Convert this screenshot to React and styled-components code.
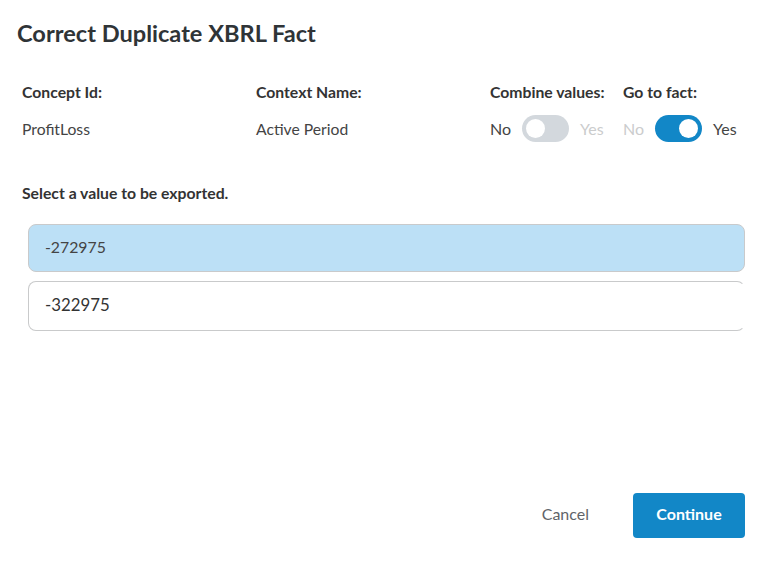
import styled, { createGlobalStyle } from "styled-components";

const GlobalStyle = createGlobalStyle`
  html, body {
    margin: 0;
    padding: 0;
    background: #fff;
  }
  body {
    font-family: Lato, "Liberation Sans", sans-serif;
    color: #333;
  }
  * {
    box-sizing: border-box;
  }
`;

const Dialog = styled.div`
  width: 777px;
  height: 574px;
  padding: 17px 32px 36px 17px;
  display: flex;
  flex-direction: column;
  overflow: hidden;
`;

const Title = styled.h1`
  margin: 0;
  font-size: 23.6px;
  line-height: 33px;
  font-weight: 700;
  color: #2f3437;
`;

const Fields = styled.div`
  display: flex;
  margin: 32px 0 0 5px;
`;

const Field = styled.div`
  flex: none;
  width: ${(props) => props.width}px;
`;

const Label = styled.div`
  font-size: 15.75px;
  line-height: 20px;
  font-weight: 700;
  color: #333;
`;

const Value = styled.div`
  margin-top: 17px;
  font-size: 15.7px;
  line-height: 20px;
  color: #444;
`;

const ToggleRow = styled.div`
  display: flex;
  align-items: center;
  gap: 11px;
  margin-top: 12px;
  height: 28px;
  font-size: 16px;
`;

const ToggleText = styled.span`
  color: ${(props) => (props.off ? "#cbcccd" : "#444")};
`;

const Track = styled.div`
  width: 47px;
  height: 27px;
  border-radius: 14px;
  padding: 4px;
  display: flex;
  justify-content: ${(props) => (props.on ? "flex-end" : "flex-start")};
  background: ${(props) => (props.on ? "#1287c7" : "#d3d8dd")};
`;

const Knob = styled.div`
  width: 19px;
  height: 19px;
  border-radius: 50%;
  background: #fff;
`;

const Prompt = styled.div`
  margin: 41px 0 0 5px;
  font-size: 15.75px;
  line-height: 20px;
  font-weight: 700;
  color: #333;
`;

const Options = styled.div`
  display: flex;
  flex-direction: column;
  gap: 9px;
  margin: 21px 0 0 11px;
`;

const Option = styled.div`
  height: ${(props) => (props.selected ? 48 : 50)}px;
  padding: 0 16px 3px;
  display: flex;
  align-items: center;
  font-size: ${(props) => (props.selected ? 15.8 : 16.8)}px;
  color: ${(props) => (props.selected ? "#444" : "#333")};
  border: 1px solid #c9cacb;
  border-right-color: ${(props) => (props.selected ? "#c9cacb" : "transparent")};
  border-radius: 8px;
  background: ${(props) => (props.selected ? "#bce0f6" : "#fff")};
`;

const Footer = styled.div`
  margin-top: auto;
  display: flex;
  justify-content: flex-end;
  align-items: center;
  gap: 44px;
`;

const CancelButton = styled.button`
  border: 0;
  padding: 0 0 5px;
  background: none;
  font: inherit;
  font-size: 16px;
  color: #5f6469;
`;

const ContinueButton = styled.button`
  width: 112px;
  height: 45px;
  border: 0;
  border-radius: 4px;
  padding: 0 0 5px;
  background: #1287c7;
  color: #fff;
  font: inherit;
  font-size: 16px;
  font-weight: 700;
`;

export default function App() {
  return (
    <>
      <GlobalStyle />
      <Dialog>
        <Title>Correct Duplicate XBRL Fact</Title>
        <Fields>
          <Field width={234}>
            <Label>Concept Id:</Label>
            <Value>ProfitLoss</Value>
          </Field>
          <Field width={234}>
            <Label>Context Name:</Label>
            <Value>Active Period</Value>
          </Field>
          <Field width={133}>
            <Label>Combine values:</Label>
            <ToggleRow>
              <ToggleText>No</ToggleText>
              <Track>
                <Knob />
              </Track>
              <ToggleText off>Yes</ToggleText>
            </ToggleRow>
          </Field>
          <Field width={122}>
            <Label>Go to fact:</Label>
            <ToggleRow>
              <ToggleText off>No</ToggleText>
              <Track on>
                <Knob />
              </Track>
              <ToggleText>Yes</ToggleText>
            </ToggleRow>
          </Field>
        </Fields>
        <Prompt>Select a value to be exported.</Prompt>
        <Options>
          <Option selected>-272975</Option>
          <Option>-322975</Option>
        </Options>
        <Footer>
          <CancelButton>Cancel</CancelButton>
          <ContinueButton>Continue</ContinueButton>
        </Footer>
      </Dialog>
    </>
  );
}
